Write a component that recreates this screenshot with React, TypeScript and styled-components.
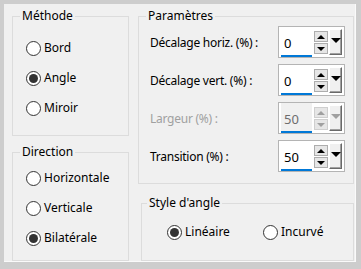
import styled, { createGlobalStyle } from 'styled-components';

const GlobalStyle = createGlobalStyle`
  body {
    margin: 0;
    background: #cdcdcd;
    font-family: 'Noto Sans', 'Liberation Sans', sans-serif;
  }
`;

const Frame = styled.div`
  width: 361px;
  height: 269px;
  box-sizing: border-box;
  padding: 4px 5px 7px 4px;
  background: #cdcdcd;
`;

const Panel = styled.div`
  height: 100%;
  box-sizing: border-box;
  background: #f0f0f0;
  border-right: 1px solid #fafafa;
  border-bottom: 1px solid #fafafa;
  padding: 4px 0 0 8px;
  display: flex;
  gap: 9px;
  font-size: 12px;
  color: #000;
`;

const Column = styled.div`
  display: flex;
  flex-direction: column;
`;

const Group = styled.fieldset<{ $w: number; $h: number; $top?: number; $left?: number }>`
  box-sizing: border-box;
  width: ${p => p.$w}px;
  height: ${p => p.$h}px;
  margin: ${p => p.$top ?? 0}px 0 0 ${p => p.$left ?? 0}px;
  padding: 0;
  border: 1px solid #dcdcdc;
  min-inline-size: 0;
`;

const Legend = styled.legend<{ $indent?: number }>`
  margin-left: ${p => p.$indent ?? 7}px;
  padding: 0 2px;
  font-size: 12px;
  line-height: 16px;
`;

const RadioList = styled.div<{ $pt: number }>`
  display: flex;
  flex-direction: column;
  padding: ${p => p.$pt}px 0 0 13px;
`;

const RadioRow = styled.div`
  display: grid;
  grid-template-columns: repeat(2, 96px);
  padding: 6px 0 0 25px;
`;

const RadioItem = styled.label`
  height: 30px;
  display: flex;
  align-items: center;
  gap: 3px;
  line-height: 16px;
`;

const RadioCircle = styled.span<{ $on?: boolean }>`
  width: 15px;
  height: 15px;
  box-sizing: border-box;
  border: 1px solid #333;
  border-radius: 50%;
  background: #fff;
  display: flex;
  align-items: center;
  justify-content: center;
  &::after {
    content: '';
    width: 9px;
    height: 9px;
    border-radius: 50%;
    background: ${p => (p.$on ? '#333' : 'transparent')};
  }
`;

const ParamList = styled.div`
  display: flex;
  flex-direction: column;
  gap: 6px;
  padding: 2px 0 0 11px;
`;

const ParamRow = styled.div<{ $off?: boolean }>`
  display: grid;
  grid-template-columns: 128px 67px;
  align-items: center;
  height: 32px;
  color: ${p => (p.$off ? '#a0a0a0' : '#000')};
`;

const ParamLabel = styled.span`
  letter-spacing: -0.25px;
`;

const SpinBox = styled.div`
  width: 67px;
  height: 32px;
  box-sizing: border-box;
  border: 1px solid #b4b4b4;
  background: #fff;
  display: flex;
  align-items: flex-start;
`;

const EditArea = styled.div<{ $off?: boolean }>`
  width: 28px;
  height: 20px;
  margin-left: 2px;
  padding: 8px 0 0 3px;
  border-bottom: 2px solid #0078d7;
  background: ${p => (p.$off ? '#f0f0f0' : '#fff')};
  color: ${p => (p.$off ? '#6d6d6d' : '#000')};
  font-size: 13px;
  line-height: 16px;
`;

const SpinColumn = styled.div`
  width: 14px;
  margin: 4px 0 0 2px;
  display: flex;
  flex-direction: column;
  gap: 1px;
`;

const SpinButton = styled.div<{ $down?: boolean; $off?: boolean }>`
  height: 11px;
  box-sizing: border-box;
  border: 1px solid ${p => (p.$off ? '#cfcfcf' : '#adadad')};
  background: #e6e6e6;
  display: flex;
  align-items: center;
  justify-content: center;
  &::after {
    content: '';
    border-left: 4px solid transparent;
    border-right: 4px solid transparent;
    ${p => (p.$down ? 'border-top' : 'border-bottom')}: 4px solid ${p => (p.$off ? '#a0a0a0' : '#000')};
  }
`;

const DropButton = styled.div<{ $off?: boolean }>`
  width: 13px;
  height: 26px;
  margin: 2px 0 0 1px;
  box-sizing: border-box;
  background: #f0f0f0;
  border-top: 1px solid #fff;
  border-left: 1px solid #fff;
  border-right: 1px solid #696969;
  border-bottom: 1px solid #696969;
  box-shadow: inset -1px -1px 0 #a0a0a0;
  display: flex;
  justify-content: center;
  padding-top: 8px;
  &::after {
    content: '';
    height: 0;
    border-left: 5px solid transparent;
    border-right: 5px solid transparent;
    border-top: 5px solid ${p => (p.$off ? '#a0a0a0' : '#000')};
  }
`;

function Radio({ label, on }: { label: string; on?: boolean }) {
  return (
    <RadioItem>
      <RadioCircle $on={on} />
      <span>{label}</span>
    </RadioItem>
  );
}

function Spin({ label, value, off }: { label: string; value: string; off?: boolean }) {
  return (
    <ParamRow $off={off}>
      <ParamLabel>{label}</ParamLabel>
      <SpinBox>
        <EditArea $off={off}>{value}</EditArea>
        <SpinColumn>
          <SpinButton $off={off} />
          <SpinButton $down $off={off} />
        </SpinColumn>
        <DropButton $off={off} />
      </SpinBox>
    </ParamRow>
  );
}

export default function App() {
  return (
    <Frame>
      <GlobalStyle />
      <Panel>
        <Column>
          <Group $w={117} $h={128}>
            <Legend>Méthode</Legend>
            <RadioList $pt={9}>
              <Radio label="Bord" />
              <Radio label="Angle" on />
              <Radio label="Miroir" />
            </RadioList>
          </Group>
          <Group $w={117} $h={117} $top={8}>
            <Legend>Direction</Legend>
            <RadioList $pt={3}>
              <Radio label="Horizontale" />
              <Radio label="Verticale" />
              <Radio label="Bilatérale" on />
            </RadioList>
          </Group>
        </Column>
        <Column>
          <Group $w={216} $h={176}>
            <Legend>Paramètres</Legend>
            <ParamList>
              <Spin label="Décalage horiz. (%) :" value="0" />
              <Spin label="Décalage vert. (%) :" value="0" />
              <Spin label="Largeur (%) :" value="50" off />
              <Spin label="Transition (%) :" value="50" />
            </ParamList>
          </Group>
          <Group $w={213} $h={66} $top={11} $left={3}>
            <Legend $indent={5}>Style d'angle</Legend>
            <RadioRow>
              <Radio label="Linéaire" on />
              <Radio label="Incurvé" />
            </RadioRow>
          </Group>
        </Column>
      </Panel>
    </Frame>
  );
}
